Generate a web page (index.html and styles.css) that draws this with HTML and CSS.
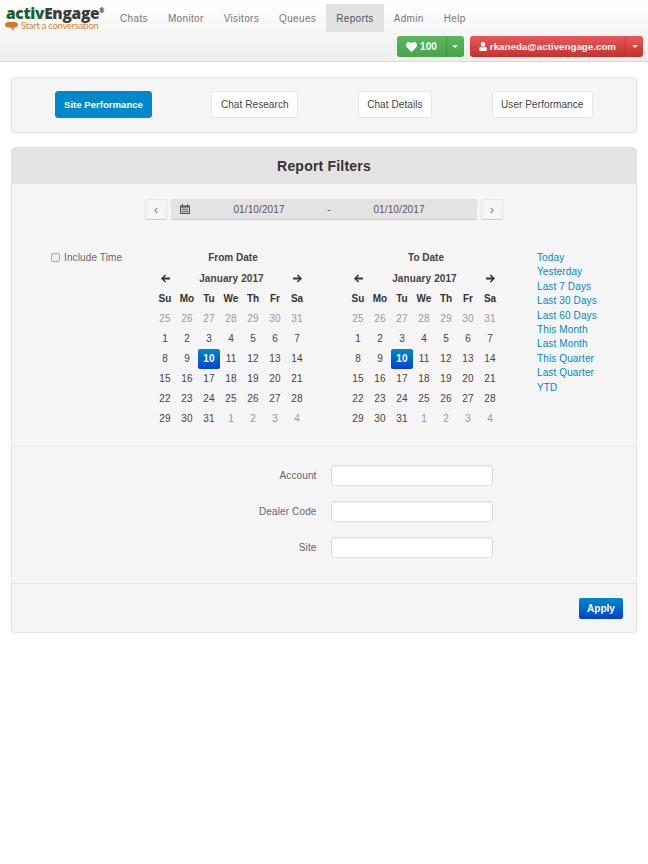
FILE: index.html
```html
<!DOCTYPE html>
<html lang="en">
  <head>
    <meta charset="UTF-8" />
    <title>activEngage Reports</title>
    <link rel="stylesheet" href="styles.css">
  </head>
  <body>
    <header class="navbar">
      <div class="logo">
        <div class="logo-name"><span class="activ">activ</span>Engage<sup>®</sup></div>
        <div class="logo-tag">
          <svg width="13" height="9" viewBox="0 0 13 9"><path d="M3.500 0h6C11.500 0 13 1.100 13 2.700S11.500 5.500 9.500 5.500H8.600L9 9 5.600 5.500H3.500C1.500 5.500 0 4.300 0 2.700S1.500 0 3.500 0z" fill="#d9771f"/></svg>
          <span>Start a conversation</span>
        </div>
      </div>
      <div class="nav-right">
        <nav class="nav-links">
          <a href="#">Chats</a>
          <a href="#">Monitor</a>
          <a href="#">Visitors</a>
          <a href="#">Queues</a>
          <a href="#" class="active">Reports</a>
          <a href="#">Admin</a>
          <a href="#">Help</a>
        </nav>
        <div class="nav-actions">
          <div class="split green">
            <button class="split-main">
              <svg width="11" height="10" viewBox="0 0 11 10"><path d="M5.500 10 1 5.400C-.4 4-.3 1.900.9.800 2.200-.4 4.300-.2 5.500 1.400 6.700-.2 8.800-.4 10.100.8c1.200 1.100 1.300 3.200-.1 4.600z" fill="#fff"/></svg>
              100
            </button>
            <button class="split-caret"><i class="caret"></i></button>
          </div>
          <div class="split red">
            <button class="split-main">
              <svg width="8" height="9" viewBox="0 0 9 10"><path d="M4.500 0a2.500 2.500 0 0 1 2.500 2.700A2.500 2.500 0 0 1 4.500 5.300 2.500 2.500 0 0 1 2 2.700 2.500 2.500 0 0 1 4.500 0zM2 5.200c.7.500 1.600.8 2.500.8s1.800-.3 2.500-.8c1.300.2 2 1.300 2 2.900 0 1.200-.7 1.900-1.800 1.900H1.800C.7 10 0 9.300 0 8.100c0-1.600.7-2.700 2-2.900z" fill="#fff"/></svg>
              rkaneda@activengage.com
            </button>
            <button class="split-caret"><i class="caret"></i></button>
          </div>
        </div>
      </div>
    </header>

    <main class="content">
      <section class="well tabs">
        <a href="#" class="tab selected">Site Performance</a>
        <a href="#" class="tab">Chat Research</a>
        <a href="#" class="tab">Chat Details</a>
        <a href="#" class="tab">User Performance</a>
      </section>

      <section class="panel">
        <h2 class="panel-title">Report Filters</h2>

        <div class="range-row">
          <button class="step">&lsaquo;</button>
          <div class="range">
            <svg class="cal-icon" width="10" height="10" viewBox="0 0 10 10"><path d="M0 1.500h10V10H0z" fill="#555"/><path d="M1 3.500h8V9H1z" fill="#e3e3e3"/><path d="M2 0h1v2.500H2zM7 0h1v2.500H7zM1 5h8v.6H1zM1 7h8v.6H1zM2.700 3.500h.6V9h-.6zM4.700 3.500h.6V9h-.6zM6.700 3.500h.6V9h-.6z" fill="#555"/></svg>
            <span class="range-date">01/10/2017</span>
            <span class="range-dash">-</span>
            <span class="range-date">01/10/2017</span>
          </div>
          <button class="step">&rsaquo;</button>
        </div>

        <div class="dates">
          <label class="include"><input type="checkbox" /> Include Time</label>

          <div class="calendar">
            <div class="cal-label">From Date</div>
            <div class="cal-month">
              <svg class="arrow" width="9" height="9" viewBox="0 0 10 9"><path d="M4.500 0 5.700 1.200 3.300 3.500H10v2H3.300l2.400 2.300L4.500 9 0 4.500z" fill="#333"/></svg>
              <span>January 2017</span>
              <svg class="arrow" width="9" height="9" viewBox="0 0 10 9"><path d="M5.500 0 4.300 1.200 6.700 3.500H0v2h6.700L4.300 7.800 5.500 9 10 4.500z" fill="#333"/></svg>
            </div>
            <div class="cal-grid">
              <b>Su</b><b>Mo</b><b>Tu</b><b>We</b><b>Th</b><b>Fr</b><b>Sa</b>
              <span class="off">25</span><span class="off">26</span><span class="off">27</span><span class="off">28</span><span class="off">29</span><span class="off">30</span><span class="off">31</span>
              <span>1</span><span>2</span><span>3</span><span>4</span><span>5</span><span>6</span><span>7</span>
              <span>8</span><span>9</span><span class="today">10</span><span>11</span><span>12</span><span>13</span><span>14</span>
              <span>15</span><span>16</span><span>17</span><span>18</span><span>19</span><span>20</span><span>21</span>
              <span>22</span><span>23</span><span>24</span><span>25</span><span>26</span><span>27</span><span>28</span>
              <span>29</span><span>30</span><span>31</span><span class="off">1</span><span class="off">2</span><span class="off">3</span><span class="off">4</span>
            </div>
          </div>

          <div class="calendar">
            <div class="cal-label">To Date</div>
            <div class="cal-month">
              <svg class="arrow" width="9" height="9" viewBox="0 0 10 9"><path d="M4.500 0 5.700 1.200 3.300 3.500H10v2H3.300l2.400 2.300L4.500 9 0 4.500z" fill="#333"/></svg>
              <span>January 2017</span>
              <svg class="arrow" width="9" height="9" viewBox="0 0 10 9"><path d="M5.500 0 4.300 1.200 6.700 3.500H0v2h6.700L4.300 7.800 5.500 9 10 4.500z" fill="#333"/></svg>
            </div>
            <div class="cal-grid">
              <b>Su</b><b>Mo</b><b>Tu</b><b>We</b><b>Th</b><b>Fr</b><b>Sa</b>
              <span class="off">25</span><span class="off">26</span><span class="off">27</span><span class="off">28</span><span class="off">29</span><span class="off">30</span><span class="off">31</span>
              <span>1</span><span>2</span><span>3</span><span>4</span><span>5</span><span>6</span><span>7</span>
              <span>8</span><span>9</span><span class="today">10</span><span>11</span><span>12</span><span>13</span><span>14</span>
              <span>15</span><span>16</span><span>17</span><span>18</span><span>19</span><span>20</span><span>21</span>
              <span>22</span><span>23</span><span>24</span><span>25</span><span>26</span><span>27</span><span>28</span>
              <span>29</span><span>30</span><span>31</span><span class="off">1</span><span class="off">2</span><span class="off">3</span><span class="off">4</span>
            </div>
          </div>

          <ul class="presets">
            <li><a href="#">Today</a></li>
            <li><a href="#">Yesterday</a></li>
            <li><a href="#">Last 7 Days</a></li>
            <li><a href="#">Last 30 Days</a></li>
            <li><a href="#">Last 60 Days</a></li>
            <li><a href="#">This Month</a></li>
            <li><a href="#">Last Month</a></li>
            <li><a href="#">This Quarter</a></li>
            <li><a href="#">Last Quarter</a></li>
            <li><a href="#">YTD</a></li>
          </ul>
        </div>

        <form class="fields">
          <div class="field"><label for="account">Account</label><input id="account" type="text" /></div>
          <div class="field"><label for="dealer">Dealer Code</label><input id="dealer" type="text" /></div>
          <div class="field"><label for="site">Site</label><input id="site" type="text" /></div>
        </form>

        <div class="panel-footer">
          <button class="apply">Apply</button>
        </div>
      </section>
    </main>
  </body>
</html>
```

FILE: styles.css
```css
* {
  box-sizing: border-box;
  padding: 0;
  margin: 0;
}

body {
  font-family: "Liberation Sans", Arial, sans-serif;
  font-size: 10px;
  letter-spacing: 0.12px;
  color: #555;
  background-color: #fff;
}

a {
  text-decoration: none;
}

button {
  font-family: inherit;
  letter-spacing: inherit;
  border: 0;
}

/* top bar */
.navbar {
  display: flex;
  height: 62px;
  padding: 4px 5px 0 5px;
  background: linear-gradient(#fff, #eee);
  border-bottom: 1px solid #d9d9d9;
}

.logo {
  width: 105px;
  flex-shrink: 0;
  padding-top: 2px;
}

.logo-name {
  padding-left: 1px;
  font-family: "Open Sans", "Liberation Sans", sans-serif;
  font-size: 15.500px;
  line-height: 15px;
  font-weight: 800;
  letter-spacing: -0.3px;
  color: #3d3d3d;
  white-space: nowrap;
}

.logo-name .activ {
  color: #17612f;
}

.logo-name sup {
  font-size: 6px;
  line-height: 0;
  vertical-align: 6px;
}

.logo-tag {
  display: flex;
  align-items: center;
  gap: 3px;
  font-family: Lato, "Liberation Sans", sans-serif;
  font-size: 9.500px;
  line-height: 10px;
  letter-spacing: -0.28px;
  color: #d9822b;
  white-space: nowrap;
}

.nav-right {
  flex: 1;
}

.nav-links {
  display: flex;
  height: 28px;
}

.nav-links a {
  padding: 9px 10px 0;
  color: #777;
  letter-spacing: 0.35px;
}

.nav-links a.active {
  background-color: #e1e1e1;
  color: #555;
}

.nav-actions {
  display: flex;
  justify-content: flex-end;
  gap: 6px;
  margin-top: 4px;
}

.split {
  display: flex;
  height: 21px;
  border-radius: 3px;
  overflow: hidden;
}

.split button {
  color: #fff;
  font-weight: bold;
  font-size: 9.700px;
  letter-spacing: 0.04px;
}

.split-main {
  display: flex;
  align-items: center;
  gap: 3px;
  padding: 0 9px;
}

.green .split-main {
  font-size: 10px;
}

.split-caret {
  width: 18px;
  border-left: 1px solid rgba(0, 0, 0, 0.15);
}

.caret {
  display: block;
  width: 0;
  margin: 0 auto;
  border-top: 3px solid #fff;
  border-left: 3px solid transparent;
  border-right: 3px solid transparent;
}

.green button {
  background: linear-gradient(#5cb85c, #47a447);
}

.red button {
  background: linear-gradient(#e8585a, #c9302c);
}

/* page */
.content {
  padding: 15px 11px;
}

.well {
  background-color: #f5f5f5;
  border: 1px solid #e3e3e3;
  border-radius: 4px;
}

.tabs {
  display: flex;
  justify-content: space-between;
  height: 56px;
  padding: 13px 43px;
}

.tab {
  height: 27px;
  padding: 0 8.500px;
  line-height: 26px;
  letter-spacing: 0.08px;
  color: #444;
  background-color: #fff;
  border: 1px solid #e6e6e6;
  border-radius: 3px;
}

.tab.selected {
  padding: 0 8px;
  color: #fff;
  font-size: 9.600px;
  font-weight: bold;
  letter-spacing: 0;
  background-color: #0088cc;
  border-color: #0088cc;
}

.panel {
  height: 486px;
  margin-top: 14px;
  background-color: #f5f5f5;
  border: 1px solid #e3e3e3;
  border-radius: 4px;
}

.panel-title {
  height: 36px;
  font-size: 14px;
  line-height: 36px;
  letter-spacing: 0.2px;
  text-align: center;
  color: #333;
  background-color: #e3e3e3;
}

.range-row {
  display: flex;
  justify-content: center;
  gap: 4px;
  margin-top: 15px;
}

.step {
  width: 22px;
  height: 21px;
  font-size: 12px;
  color: #777;
  background-color: #f5f5f5;
  border: 1px solid #e8e8e8;
  border-bottom-color: #ccc;
  border-radius: 2px;
}

.range {
  display: flex;
  align-items: center;
  width: 306px;
  height: 21px;
  padding-left: 9px;
  background-color: #e3e3e3;
  border-bottom: 1px solid #d0d0d0;
  border-radius: 2px;
  color: #555;
}

.cal-icon {
  flex-shrink: 0;
}

.range-date {
  width: 116px;
  text-align: center;
}

.range-dash {
  width: 24px;
  text-align: center;
}

.range-date:first-of-type {
  margin-left: 11px;
}

.dates {
  display: flex;
  height: 227px;
  padding: 31px 0 0 39px;
  border-bottom: 1px solid #eaeaea;
}

.include {
  display: flex;
  align-items: flex-start;
  gap: 4px;
  width: 103px;
  line-height: 14px;
  color: #666;
}

.include input {
  appearance: none;
  width: 9px;
  height: 9px;
  margin-top: 2px;
  background-color: #eee;
  border: 1px solid #aaa;
  border-radius: 2px;
}

.calendar {
  width: 154px;
  margin-right: 39px;
  color: #444;
}

.cal-label {
  padding-left: 4px;
  font-weight: bold;
  line-height: 14px;
  letter-spacing: 0;
  text-align: center;
}

.cal-month {
  display: flex;
  align-items: center;
  justify-content: space-between;
  height: 20px;
  margin: 3px 0 1px;
  padding: 0 6px 0 7px;
  font-weight: bold;
  letter-spacing: 0.1px;
}

.cal-grid {
  display: grid;
  grid-template-columns: repeat(7, 22px);
  grid-auto-rows: 20px;
  line-height: 20px;
  text-align: center;
}

.cal-grid b {
  color: #333;
  letter-spacing: 0;
}

.cal-grid .off {
  color: #999;
}

.cal-grid .today {
  color: #fff;
  font-weight: bold;
  background: linear-gradient(#0088cc, #0044cc);
  border-radius: 2px;
}

.presets {
  list-style: none;
  margin-left: -3px;
  line-height: 14.400px;
}

.presets a {
  color: #0088cc;
}

.fields {
  height: 137px;
  padding-top: 18px;
  border-bottom: 1px solid #e6e6e6;
}

.field {
  display: flex;
  align-items: center;
  height: 21px;
  margin-bottom: 15px;
}

.field label {
  width: 304.500px;
  text-align: right;
  color: #666;
}

.field input {
  width: 162px;
  height: 21px;
  margin-left: 14.500px;
  background-color: #fff;
  border: 1px solid #ddd;
  border-radius: 3px;
  box-shadow: inset 0 1px 1px rgba(0, 0, 0, 0.05);
}

.panel-footer {
  display: flex;
  justify-content: flex-end;
  padding: 14px 13px 0 0;
}

.apply {
  width: 44px;
  height: 21px;
  color: #fff;
  font-size: 10px;
  font-weight: bold;
  letter-spacing: 0;
  background: linear-gradient(#0088cc, #0044cc);
  border-radius: 2px;
}
```
